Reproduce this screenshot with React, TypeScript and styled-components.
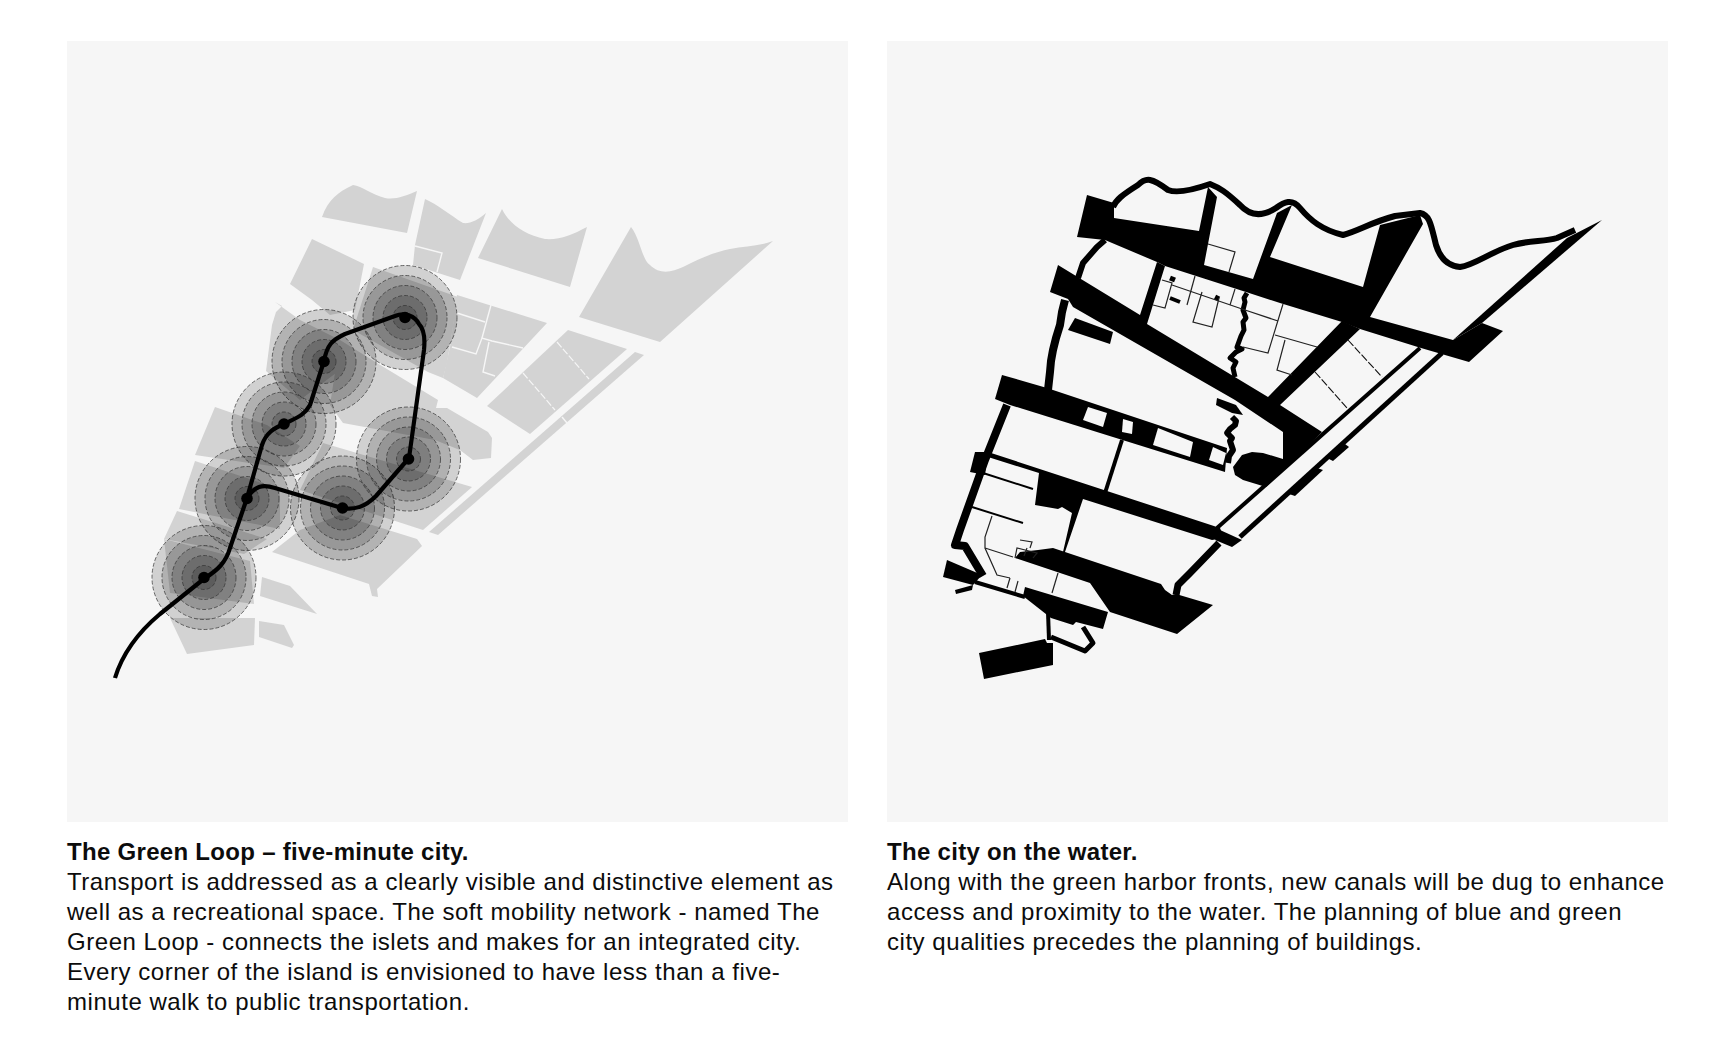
import React from "react";
import styled, { createGlobalStyle } from "styled-components";

const GlobalStyle = createGlobalStyle`
  html, body { margin: 0; padding: 0; background: #ffffff; }
`;

const Page = styled.main`
  display: grid;
  grid-template-columns: 781px 781px;
  column-gap: 39px;
  padding: 41px 54px 0 67px;
  width: 1722px;
  height: 1042px;
  box-sizing: border-box;
  overflow: hidden;
  font-family: "Liberation Sans", Arial, sans-serif;
  color: #0c0c0c;
`;

const Figure = styled.figure`
  margin: 0;
  display: flex;
  flex-direction: column;
`;

const Panel = styled.div`
  width: 781px;
  height: 781px;
  background: #f6f6f6;
`;

const Drawing = styled.svg`
  display: block;
  width: 100%;
  height: 100%;
`;

const Caption = styled.figcaption`
  margin-top: 15px;
  font-size: 24px;
  line-height: 30px;
  white-space: nowrap;
`;

const CaptionTitle = styled.div`
  font-weight: 700;
  letter-spacing: 0.3px;
`;

const CaptionBody = styled.div`
  font-weight: 400;
  letter-spacing: 0.54px;
`;

type Pt = number[];
const pts = (p: Pt) => {
  const out: string[] = [];
  for (let i = 0; i < p.length; i += 2) out.push(`${p[i]},${p[i + 1]}`);
  return out.join(" ");
};

const curvedBlocks: string[] = [
  "M322 217 C328 200,338 192,353 185 C362 186,372 195,385 198 C395 200,405 196,417 191 L407 233 Z",
  "M425 199 C437 204,450 215,463 223 C470 224,478 220,486 213 L460 280 L413 265 L415 245 Z",
  "M502 209 C510 225,525 235,545 239 C560 240,572 235,587 227 L570 287 L478 258 Z",
  "M631 227 C640 238,642 260,650 265 C660 275,672 272,683 267 C700 258,715 252,730 249 C745 246,760 246,773 241 L660 342 L579 317 Z",
];

const greyBlocks: Pt[] = [
  [457,295,547,323,477,398,443,378,450,347],
  [568,330,627,349,530,434,487,406],
  [635,352,644,355,438,535,429,532],
  [373,267,458,297,447,363,443,378,428,372,353,330],
  [290,284,312,239,364,264,355,310,330,315,312,300],
  [275,302,282,306,276,312,272,325,266,371,300,400,340,370,340,340,300,320],
  [340,340,377,363,438,400,436,408,447,408,488,432,492,438,491,458,473,460,460,450,435,440,343,423,330,405],
  [323,443,472,487,423,530,300,490],
  [272,552,300,530,340,515,417,539,422,546,377,589,378,597,372,596,369,584],
  [215,407,267,425,300,446,284,468,195,455],
  [195,461,280,489,280,529,179,509],
  [177,511,267,539,244,554,164,539],
  [164,539,250,561,254,604,170,593],
  [170,618,255,618,254,645,187,654],
  [259,621,284,625,294,645,292,648,259,637],
  [262,577,290,586,317,614,260,596],
];

const greySolidLines: Pt[] = [
  [415,246,442,253,437,272],
  [491,305,482,338],
  [457,313,485,322],
  [452,347,476,354,482,338,492,341,523,348],
  [489,342,483,372,495,376],
  [562,417,567,423],
];

const greyDashes: Pt[] = [
  [557,342,589,379],
  [523,373,555,410],
];

const stops = [
  { x: 405, y: 317.5 },
  { x: 324, y: 361.5 },
  { x: 284, y: 424 },
  { x: 247, y: 498.5 },
  { x: 204, y: 577.5 },
  { x: 342.5, y: 508 },
  { x: 408.5, y: 459 },
];
const radii = [52, 42, 32, 22, 12];

const loopPath =
  "M115 678 C122 655,135 635,160 614 L205 578 C218 570,226 562,230 548 L247 498 L262 445 C266 433,274 428,284 424 C296 418,304 416,310 405 L324 361 C327 345,332 340,345 334 L395 316 C405 312,415 316,419 324 C425 330,425 340,424 350 L409 458 L376 496 C365 507,355 510,342 508 L275 488 C262 484,255 486,247 498";

const blackShapes: Pt[] = [
  [1087,195,1114,203,1114,218,1199,231,1208,187,1217,197,1208,244,1204,265,1253,279,1277,213,1292,205,1270,257,1363,287,1380,225,1420,215,1423,224,1370,317,1453,340,1482,323,1503,331,1469,362,1445,355,1421,348,1360,329,1342,322,1280,303,1246,292,1165,266,1157,262,1105,240,1077,237],
  [1058,265,1140,315,1157,262,1165,266,1147,324,1268,397,1342,321,1360,329,1280,405,1322,432,1266,487,1243,480,1235,475,1233,467,1242,455,1252,452,1263,453,1283,459,1283,432,1235,400,1073,307,1068,299,1050,292],
  [1002,375,1047,388,1227,448,1225,472,1010,405,995,399],
  [988,452,1220,528,1224,538,1212,540,1083,499,1065,552,1063,552,1072,513,1062,507,1058,509,1035,505,1039,473,988,457],
  [975,452,970,472,985,475,988,452],
  [947,560,982,575,973,585,943,577],
  [955,590,973,585,972,590,956,594],
  [1025,587,1108,612,1103,629,1076,622,1073,625,1051,618,1023,596],
  [1038,550,1053,548,1161,584,1165,590,1172,595,1176,594,1213,605,1177,634,1110,612,1090,583,1015,558,1020,552],
  [979,653,1045,639,1047,643,1053,643,1053,665,984,679],
  [1068,330,1075,318,1113,332,1110,344],
  [1345,444,1349,447,1333,461,1327,458],
  [1317,468,1323,470,1295,496,1286,493],
  [1220,530,1242,540,1232,547,1215,540],
  [1602,220,1567,238,1453,340,1482,323],
  [1217,398,1236,405,1243,415,1232,413,1216,405],
];

const holes: Pt[] = [
  [1083,420,1088,407,1107,413,1103,427],
  [1122,432,1123,419,1133,422,1132,434],
  [1153,445,1158,428,1193,442,1190,457],
  [1209,460,1213,447,1226,453,1223,465],
];

const thickLines: { p: Pt; w: number }[] = [
  { p: [1420,348,1217,528], w: 4 },
  { p: [1442,353,1240,537], w: 5 },
  { p: [1122,440,1105,493], w: 4 },
  { p: [1007,405,985,460,960,530,955,545,965,546,983,576], w: 8 },
  { p: [975,582,1025,597], w: 4 },
  { p: [1219,543,1190,573,1178,585,1176,595], w: 7 },
  { p: [1048,612,1049,640], w: 4 },
  { p: [1051,637,1085,651,1093,643,1083,627], w: 5 },
  { p: [1105,240,1097,247,1083,263,1078,278], w: 6 },
  { p: [1065,300,1062,312,1060,325,1056,338,1053,350,1051,361,1050,372,1048,390], w: 8 },
  { p: [983,473,1033,489], w: 2 },
  { p: [972,507,1023,523], w: 2 },
  { p: [1247,293,1244,298,1245,302,1243,310,1246,318,1243,322,1244,330,1241,336,1237,347,1242,349,1236,352,1230,358,1236,362,1233,368,1235,377], w: 5 },
  { p: [1232,417,1236,421,1235,425,1230,429,1227,433,1232,438,1230,441,1233,450,1229,456,1228,463], w: 6 },
  { p: [1170,278,1175,280], w: 5 },
  { p: [1170,298,1180,302], w: 4 },
  { p: [1215,297,1219,299], w: 5 },
];

const thinLines: Pt[] = [
  [1208,244,1235,252,1229,272],
  [1195,276,1187,305],
  [1153,305,1165,308,1172,283,1162,280],
  [1172,285,1245,310,1278,321],
  [1202,292,1193,322,1212,327,1219,298],
  [1235,289,1230,305],
  [1283,304,1268,353,1243,347],
  [1275,335,1317,347],
  [1285,340,1277,370,1292,375],
  [992,516,985,537,985,548,997,575,1010,578],
  [985,548,1013,557],
  [1058,573,1052,593],
  [1015,558,1017,548,1037,553,1033,558],
  [1027,548,1024,556],
  [1020,540,1032,542,1030,548],
  [1010,578,1007,588],
  [1018,581,1015,592],
];

const coast =
  "M1113 207 C1116 200,1122 195,1138 185 C1146 177,1152 178,1168 190 C1176 193,1190 191,1210 184 C1220 188,1226 192,1240 205 C1250 216,1262 217,1276 208 C1284 202,1292 198,1300 208 C1310 220,1322 230,1343 235 C1358 231,1372 222,1395 216 L1420 213 C1430 215,1431 225,1436 245 C1440 258,1448 266,1460 267 C1475 265,1490 252,1513 245 C1530 240,1545 242,1557 238 L1575 230";

const dashes: Pt[] = [
  [1348,340,1382,377],
  [1315,372,1347,408],
];

export default function App() {
  return (
    <Page>
      <GlobalStyle />
      <Figure>
        <Panel>
          <Drawing viewBox="67 41 781 781" aria-hidden="true">
            {curvedBlocks.map((d, i) => (
              <path key={i} d={d} fill="#d3d3d3" />
            ))}
            {greyBlocks.map((b, i) => (
              <polygon key={i} points={pts(b)} fill="#d3d3d3" />
            ))}
            {greySolidLines.map((l, i) => (
              <polyline key={i} points={pts(l)} fill="none" stroke="#f6f6f6" strokeWidth={1.4} />
            ))}
            {greyDashes.map((l, i) => (
              <polyline key={i} points={pts(l)} fill="none" stroke="#f6f6f6" strokeWidth={1.2} strokeDasharray="7 2" />
            ))}
            {stops.map((s, i) =>
              radii.map((r) => (
                <circle
                  key={`${i}-${r}`}
                  cx={s.x}
                  cy={s.y}
                  r={r}
                  fill="#000"
                  fillOpacity={0.15}
                  stroke="#333"
                  strokeOpacity={0.8}
                  strokeWidth={0.9}
                  strokeDasharray="4 2"
                />
              ))
            )}
            <path d={loopPath} fill="none" stroke="#000" strokeWidth={4.2} strokeLinejoin="round" />
            {stops.map((s, i) => (
              <circle key={i} cx={s.x} cy={s.y} r={5.8} fill="#000" />
            ))}
          </Drawing>
        </Panel>
        <Caption>
          <CaptionTitle>The Green Loop – five-minute city.</CaptionTitle>
          <CaptionBody>
            Transport is addressed as a clearly visible and distinctive element as
            <br />
            well as a recreational space. The soft mobility network - named The
            <br />
            Green Loop - connects the islets and makes for an integrated city.
            <br />
            Every corner of the island is envisioned to have less than a five-
            <br />
            minute walk to public transportation.
          </CaptionBody>
        </Caption>
      </Figure>
      <Figure>
        <Panel>
          <Drawing viewBox="887 41 781 781" aria-hidden="true">
            {blackShapes.map((b, i) => (
              <polygon key={i} points={pts(b)} fill="#000" />
            ))}
            {holes.map((b, i) => (
              <polygon key={i} points={pts(b)} fill="#f6f6f6" />
            ))}
            <path d={coast} fill="none" stroke="#000" strokeWidth={6} strokeLinejoin="round" />
            {thickLines.map((l, i) => (
              <polyline key={i} points={pts(l.p)} fill="none" stroke="#000" strokeWidth={l.w} strokeLinejoin="round" />
            ))}
            {thinLines.map((l, i) => (
              <polyline key={i} points={pts(l)} fill="none" stroke="#222" strokeWidth={1.2} />
            ))}
            {dashes.map((l, i) => (
              <polyline key={i} points={pts(l)} fill="none" stroke="#111" strokeWidth={1.1} strokeDasharray="8 2" />
            ))}
          </Drawing>
        </Panel>
        <Caption>
          <CaptionTitle>The city on the water.</CaptionTitle>
          <CaptionBody>
            Along with the green harbor fronts, new canals will be dug to enhance
            <br />
            access and proximity to the water. The planning of blue and green
            <br />
            city qualities precedes the planning of buildings.
          </CaptionBody>
        </Caption>
      </Figure>
    </Page>
  );
}
